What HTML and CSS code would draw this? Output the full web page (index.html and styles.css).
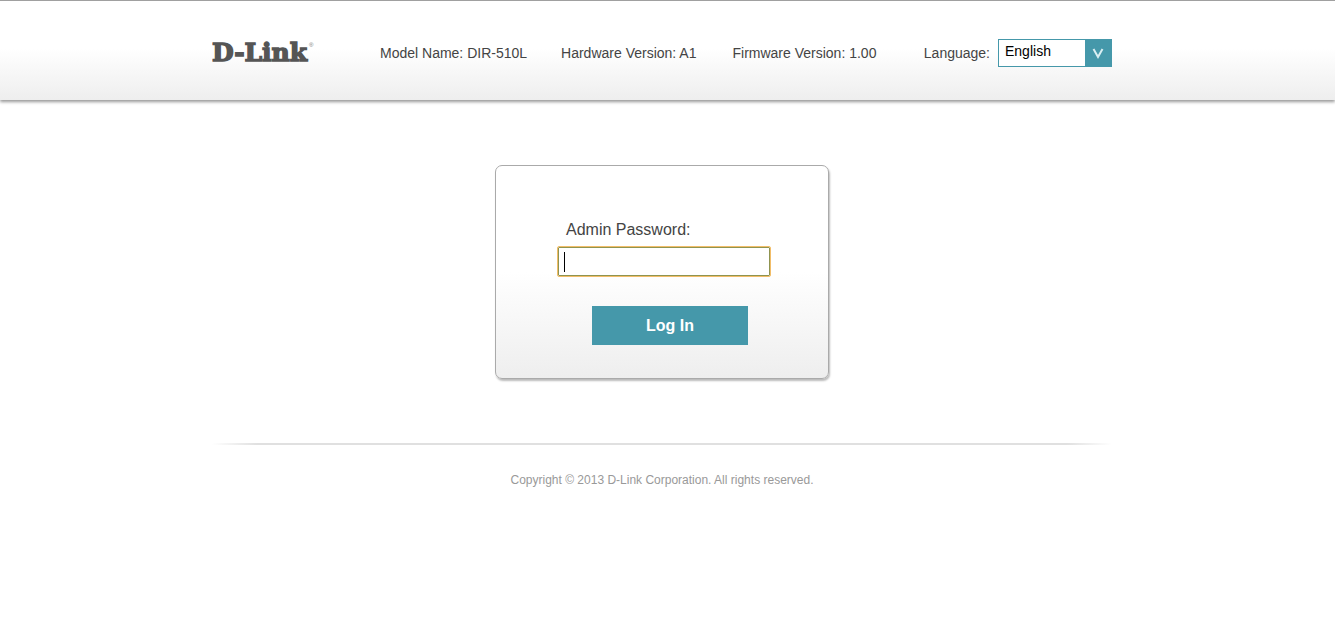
FILE: index.html
```
<!DOCTYPE html>
<html lang="en">
<head>
<meta charset="utf-8">
<meta name="viewport" content="width=device-width, initial-scale=1">
<title>D-Link</title>
<link rel="stylesheet" href="styles.css">
</head>
<body>
<header class="header">
  <div class="container header-row">
    <svg class="logo" viewBox="0 0 104 32" role="img" aria-label="D-Link">
      <text class="logo-name" x="0" y="24">D-Link</text>
      <text class="logo-mark" x="97" y="10">®</text>
    </svg>
    <span class="info model">Model Name: DIR-510L</span>
    <span class="info hardware">Hardware Version: A1</span>
    <span class="info firmware">Firmware Version: 1.00</span>
    <div class="language">
      <label for="language">Language:</label>
      <div class="select-box">
        <select id="language" class="select">
          <option>English</option>
        </select>
        <svg class="select-arrow" viewBox="0 0 27 28" aria-hidden="true">
          <path d="M8.500 10 L13 18 L17.500 10" />
        </svg>
      </div>
    </div>
  </div>
</header>
<main class="container main">
  <form class="login">
    <label class="login-label" for="password">Admin Password:</label>
    <input class="login-input" id="password" type="password">
    <button class="login-button" type="button">Log In</button>
  </form>
</main>
<footer class="container footer">
  <hr class="divider">
  <p class="copyright">Copyright © 2013 D-Link Corporation. All rights reserved.</p>
</footer>
</body>
</html>
```
FILE: styles.css
```
* {
  box-sizing: border-box;
}

body {
  margin: 0;
  background: #fff;
  color: #444;
  font-family: "Liberation Sans", Arial, sans-serif;
  font-size: 14px;
}

.container {
  max-width: 911px;
  margin: 0 auto;
  padding-right: 11px;
}

.header {
  padding: 36px 0 31px;
  border-top: 1px solid #a0a0a0;
  background: linear-gradient(#fff 48%, #eee);
  box-shadow: 0 2px 3px #999;
}

.header-row {
  display: flex;
  align-items: center;
}

.logo {
  width: 104px;
  height: 32px;
  margin-right: 64px;
  flex-shrink: 0;
}

.logo-name {
  font: bold 25px "DejaVu Serif", serif;
  fill: #555;
  stroke: #555;
  stroke-width: 1.4px;
}

.logo-mark {
  font: 6px "Liberation Sans", sans-serif;
  fill: #777;
}

.info {
  white-space: nowrap;
}

.model {
  margin-right: 34px;
}

.hardware {
  margin-right: 36px;
}

.language {
  display: flex;
  align-items: center;
  gap: 8px;
  margin-left: auto;
}

.select-box {
  position: relative;
  width: 114px;
}

.select {
  display: block;
  width: 100%;
  height: 28px;
  padding: 0 32px 4px 6px;
  border: 1px solid #4598aa;
  border-radius: 0;
  background: #fff;
  color: #000;
  font: 14px "Liberation Sans", Arial, sans-serif;
  appearance: none;
}

.select-arrow {
  position: absolute;
  top: 0;
  right: 0;
  width: 27px;
  height: 28px;
  background: #4598aa;
  fill: none;
  stroke: #d9eef2;
  stroke-width: 2px;
  pointer-events: none;
}

.main {
  display: flex;
  justify-content: center;
  padding-top: 65px;
}

.login {
  display: flex;
  flex-direction: column;
  width: 334px;
  padding: 55px 58px 33px 62px;
  border: 1px solid #aaa;
  border-radius: 7px;
  background: linear-gradient(#fff 50%, #eee);
  box-shadow: 1px 2px 2px #bbb;
}

.login-label {
  margin: 0 0 8px 8px;
  font-size: 16px;
  line-height: 18px;
}

.login-input {
  width: 100%;
  height: 29px;
  border: 1px solid #8f9450;
  border-radius: 1px;
  outline: 1px solid #f2bd68;
  background: linear-gradient(#000, #000) 5px 4px / 1px 20px no-repeat #fff;
  caret-color: transparent;
}

.login-button {
  width: 156px;
  height: 39px;
  margin: 30px 0 0 34px;
  border: 0;
  background: #4598aa;
  color: #fff;
  font: bold 16px "Liberation Sans", Arial, sans-serif;
}

.footer {
  padding-top: 64px;
}

.divider {
  height: 2px;
  margin: 0;
  border: 0;
  background: linear-gradient(90deg, #fff, #e0e0e0 5%, #e0e0e0 95%, #fff);
}

.copyright {
  margin: 28px 0 0;
  color: #999;
  font-size: 12px;
  line-height: 14px;
  text-align: center;
}
```
